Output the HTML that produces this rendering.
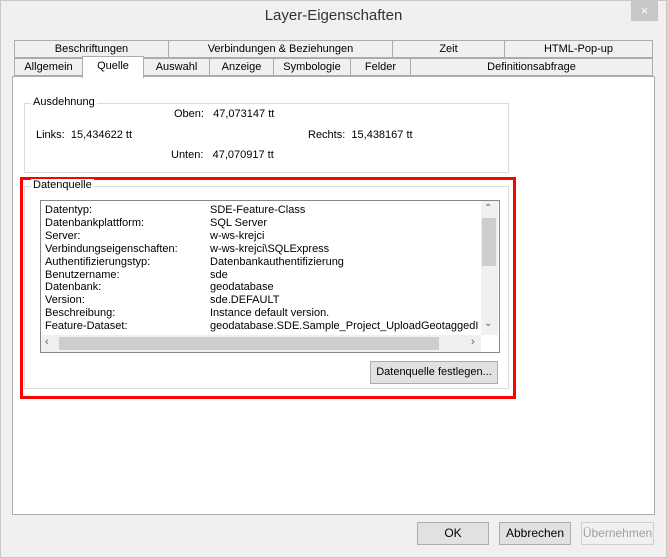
<!DOCTYPE html><html><head><style>
*{margin:0;padding:0;box-sizing:border-box}
body{width:667px;height:558px;background:#f0f0f0;font-family:"Liberation Sans",sans-serif;font-size:11px;color:#000;position:relative;overflow:hidden}
.a{position:absolute;white-space:nowrap}
.tab{position:absolute;border:1px solid #acacac;background:#f0f0f0;text-align:center;line-height:16px;height:18px}
.btn{position:absolute;border:1px solid #adadad;background:#e1e1e1;text-align:center;line-height:21px;height:23px;font-size:12px}
.grp{position:absolute;border:1px solid #dcdcdc}
.lg{position:absolute;background:#fff;padding:0 2px;top:-8px;left:6px}
</style></head><body>
<div class="a" style="left:0;top:0;width:667px;height:558px;border:1px solid #c8c8c8"></div>
<div class="a" style="left:0;top:7px;width:667px;text-align:center;font-size:15px;color:#333">Layer-Eigenschaften</div>
<div class="a" style="left:631px;top:1px;width:27px;height:20px;background:#c7c7c7;color:#fff;text-align:center;font-size:13px;line-height:20px">×</div>
<div class="a" style="left:12px;top:76px;width:643px;height:439px;background:#fff;border:1px solid #acacac"></div>
<div class="tab" style="left:14px;top:40px;width:155px">Beschriftungen</div>
<div class="tab" style="left:168px;top:40px;width:225px">Verbindungen &amp; Beziehungen</div>
<div class="tab" style="left:392px;top:40px;width:113px">Zeit</div>
<div class="tab" style="left:504px;top:40px;width:149px">HTML-Pop-up</div>
<div class="tab" style="left:14px;top:58px;width:69px">Allgemein</div>
<div class="tab" style="left:143px;top:58px;width:67px">Auswahl</div>
<div class="tab" style="left:209px;top:58px;width:65px">Anzeige</div>
<div class="tab" style="left:273px;top:58px;width:78px">Symbologie</div>
<div class="tab" style="left:350px;top:58px;width:61px">Felder</div>
<div class="tab" style="left:410px;top:58px;width:243px">Definitionsabfrage</div>
<div class="tab" style="left:82px;top:56px;width:62px;height:22px;background:#fff;border-bottom:none;line-height:18px">Quelle</div>
<div class="grp" style="left:24px;top:103px;width:485px;height:70px"><span class="lg">Ausdehnung</span></div>
<div class="a" style="left:174px;top:108px">Oben:&nbsp;&nbsp; 47,073147 tt</div>
<div class="a" style="left:36px;top:129px">Links:&nbsp; 15,434622 tt</div>
<div class="a" style="left:308px;top:129px">Rechts:&nbsp; 15,438167 tt</div>
<div class="a" style="left:171px;top:149px">Unten:&nbsp;&nbsp; 47,070917 tt</div>
<div class="a" style="left:20px;top:177px;width:496px;height:222px;border:3px solid #f00"></div>
<div class="grp" style="left:24px;top:186px;width:485px;height:203px"><span class="lg">Datenquelle</span></div>
<div class="a" style="left:40px;top:200px;width:460px;height:153px;border:1px solid #828790;background:#fff"></div>
<div class="a" style="left:45px;top:204px;line-height:12.9px">Datentyp:<br>Datenbankplattform:<br>Server:<br>Verbindungseigenschaften:<br>Authentifizierungstyp:<br>Benutzername:<br>Datenbank:<br>Version:<br>Beschreibung:<br>Feature-Dataset:</div>
<div class="a" style="left:210px;top:204px;line-height:12.9px;width:268px;overflow:hidden">SDE-Feature-Class<br>SQL Server<br>w-ws-krejci<br>w-ws-krejci\SQLExpress<br>Datenbankauthentifizierung<br>sde<br>geodatabase<br>sde.DEFAULT<br>Instance default version.<br>geodatabase.SDE.Sample_Project_UploadGeotaggedImages</div>
<div class="a" style="left:481px;top:201px;width:17px;height:134px;background:#f0f0f0"></div>
<div class="a" style="left:482px;top:218px;width:14px;height:48px;background:#cdcdcd"></div>
<div class="a" style="left:484px;top:203px;font-size:10px;color:#606060">⌃</div>
<div class="a" style="left:484px;top:318px;font-size:10px;color:#606060">⌄</div>
<div class="a" style="left:41px;top:335px;width:440px;height:17px;background:#f0f0f0"></div>
<div class="a" style="left:59px;top:337px;width:380px;height:13px;background:#cdcdcd"></div>
<div class="a" style="left:45px;top:336px;color:#606060">‹</div>
<div class="a" style="left:471px;top:336px;color:#606060">›</div>
<div class="btn" style="left:370px;top:361px;width:128px;font-size:11px">Datenquelle festlegen...</div>
<div class="btn" style="left:417px;top:522px;width:72px">OK</div>
<div class="btn" style="left:499px;top:522px;width:72px">Abbrechen</div>
<div class="btn" style="left:581px;top:522px;width:73px;color:#a0a0a0;background:#f0f0f0;border-color:#d0d0d0">Übernehmen</div>
</body></html>
